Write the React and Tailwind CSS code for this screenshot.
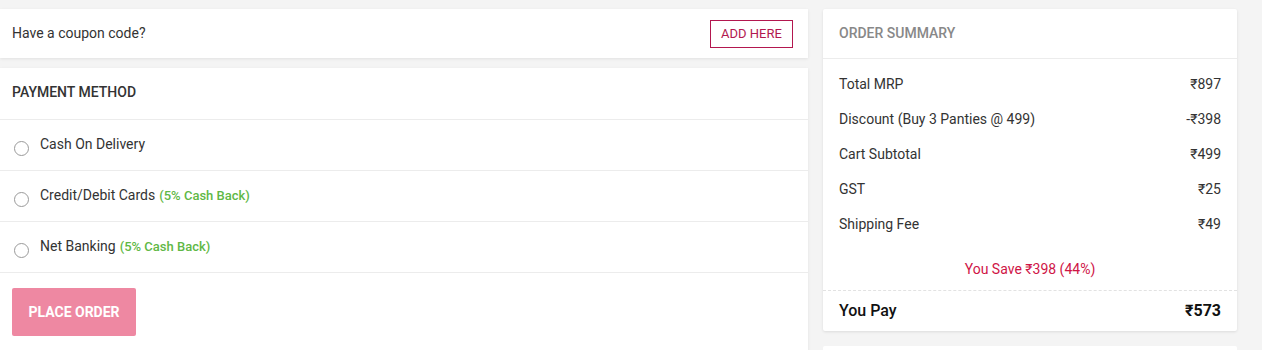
export default function App() {
  const rows = [
    ["Total MRP", "₹897"],
    ["Discount (Buy 3 Panties @ 499)", "-₹398"],
    ["Cart Subtotal", "₹499"],
    ["GST", "₹25"],
    ["Shipping Fee", "₹49"],
  ];
  const methods = [
    ["Cash On Delivery", null],
    ["Credit/Debit Cards", "(5% Cash Back)"],
    ["Net Banking", "(5% Cash Back)"],
  ];
  return (
    <div
      className="w-[1262px] h-[350px] overflow-hidden bg-[#f4f4f4] text-[#333]"
      style={{ fontFamily: "Roboto, 'Liberation Sans', sans-serif" }}
    >
      <div className="flex gap-[15px] pt-[9px]">
        <div className="w-[808px] flex flex-col gap-[10px]">
          <div className="h-[49px] bg-white shadow-[0_1px_3px_rgba(0,0,0,0.08)] flex items-center justify-between pl-[12px] pr-[15px]">
            <span className="text-[14px] text-[#333]">Have a coupon code?</span>
            <button className="h-[28px] w-[83px] border border-[#b3174f] text-[#b3174f] text-[13px] flex items-center justify-center">
              ADD HERE
            </button>
          </div>
          <div className="bg-white shadow-[0_1px_3px_rgba(0,0,0,0.08)] h-[300px]">
            <div className="h-[52px] flex items-center px-[12px] pb-[2px] border-b border-[#ececec] text-[14px] font-medium text-[#333]">
              PAYMENT METHOD
            </div>
            {methods.map(([label, extra]) => (
              <div
                key={label}
                className="h-[51px] flex items-center px-[14px] border-b border-[#ececec]"
              >
                <span className="w-[15px] h-[15px] rounded-full border border-[#9a9a9a] mt-[6px] mr-[11px] shrink-0" />
                <span className="text-[14px] text-[#333] mb-[1px]">
                  {label}
                  {extra && (
                    <span className="text-[13px] font-medium text-[#5fb846] ml-[4px]">{extra}</span>
                  )}
                </span>
              </div>
            ))}
            <div className="pt-[15px] pl-[12px]">
              <button className="w-[124px] h-[48px] rounded-[2px] bg-[#ee88a2] text-white text-[14px] font-bold">
                PLACE ORDER
              </button>
            </div>
          </div>
        </div>
        <div className="w-[414px] flex flex-col gap-[15px]">
          <div className="bg-white rounded-[2px] shadow-[0_1px_3px_rgba(0,0,0,0.1)]">
            <div className="h-[50px] flex items-center px-[16px] border-b border-[#ececec] text-[14px] font-medium text-[#888]">
              ORDER SUMMARY
            </div>
            <div className="pt-[8px]">
              {rows.map(([k, v]) => (
                <div key={k} className="h-[35px] flex items-center justify-between px-[16px] text-[14px] text-[#333]">
                  <span>{k}</span>
                  <span>{v}</span>
                </div>
              ))}
            </div>
            <div className="h-[48px] flex items-center justify-center text-[14px] text-[#cf1446] pt-[7px]">
              You Save ₹398 (44%)
            </div>
            <div className="h-[41px] flex items-center justify-between px-[16px] border-t border-dashed border-[#e2e2e2] text-[16px] text-[#111]">
              <span className="font-medium">You Pay</span>
              <span className="font-bold">₹573</span>
            </div>
          </div>
          <div className="bg-white h-[40px] rounded-[2px]" />
        </div>
      </div>
    </div>
  );
}
